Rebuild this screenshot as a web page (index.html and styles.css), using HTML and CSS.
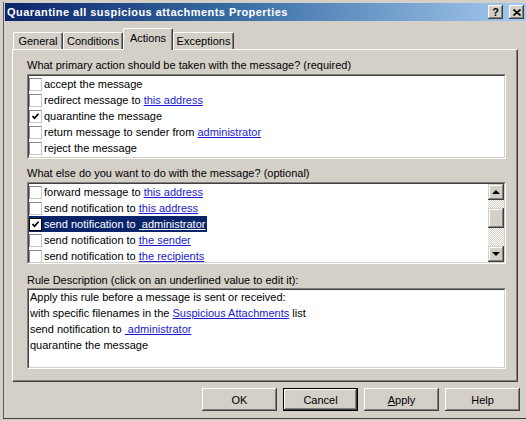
FILE: index.html
```html
<!DOCTYPE html>
<html>
<head>
<meta charset="utf-8">
<link rel="stylesheet" href="styles.css">
</head>
<body>
<div class="window">
  <div class="frame">
    <div class="titlebar">
      <span class="title">Quarantine all suspicious attachments Properties</span>
      <div class="capbtns">
        <span class="capbtn help">?</span>
        <span class="capbtn close">
          <svg width="8" height="7" viewBox="0 0 8 7"><path d="M0.5 0.5 L7.5 6.5 M7.5 0.5 L0.5 6.5" stroke="#000" stroke-width="1.6" fill="none"/></svg>
        </span>
      </div>
    </div>

    <div class="tabs">
      <div class="tab t-general">General</div>
      <div class="tab t-conditions">Conditions</div>
      <div class="tab t-actions active">Actions</div>
      <div class="tab t-exceptions">Exceptions</div>
    </div>

    <div class="panel">
      <div class="label">What primary action should be taken with the message? (required)</div>
      <div class="sunken box1">
        <div class="sunken-in list">
          <div class="row"><span class="cb"></span><span class="txt">accept the message</span></div>
          <div class="row"><span class="cb"></span><span class="txt">redirect message to <a class="lnk">this address</a></span></div>
          <div class="row"><span class="cb checked"><svg width="9" height="9" viewBox="0 0 9 9"><path d="M1.5 4 L3.5 6.3 L7.5 1.8" stroke="#000" stroke-width="1.7" fill="none"/></svg></span><span class="txt">quarantine the message</span></div>
          <div class="row"><span class="cb"></span><span class="txt">return message to sender from <a class="lnk">administrator</a></span></div>
          <div class="row"><span class="cb"></span><span class="txt">reject the message</span></div>
        </div>
      </div>

      <div class="label label2">What else do you want to do with the message? (optional)</div>
      <div class="sunken box2">
        <div class="sunken-in list2">
          <div class="items">
            <div class="row"><span class="cb"></span><span class="txt">forward message to <a class="lnk">this address</a></span></div>
            <div class="row"><span class="cb"></span><span class="txt">send notification to <a class="lnk">this address</a></span></div>
            <div class="row selected"><span class="cb checked focus"><svg width="9" height="9" viewBox="0 0 9 9"><path d="M1.5 4 L3.5 6.3 L7.5 1.8" stroke="#000" stroke-width="1.7" fill="none"/></svg></span><span class="txt">send notification to <a class="lnk">&nbsp;administrator</a></span></div>
            <div class="row"><span class="cb"></span><span class="txt">send notification to <a class="lnk">the sender</a></span></div>
            <div class="row"><span class="cb"></span><span class="txt">send notification to <a class="lnk">the recipients</a></span></div>
          </div>
          <div class="scrollbar">
            <div class="sbtn"><span class="arrow up"></span></div>
            <div class="track"><div class="thumb"></div></div>
            <div class="sbtn"><span class="arrow down"></span></div>
          </div>
        </div>
      </div>

      <div class="label label3">Rule Description (click on an underlined value to edit it):</div>
      <div class="sunken box3">
        <div class="sunken-in desc">
          <div class="line">Apply this rule before a message is sent or received:</div>
          <div class="line">with specific filenames in the <a class="lnk">Suspicious Attachments</a> list</div>
          <div class="line">send notification to <a class="lnk">&nbsp;administrator</a></div>
          <div class="line">quarantine the message</div>
        </div>
      </div>
    </div>

    <div class="buttons">
      <div class="btn">OK</div>
      <div class="btn default"><div class="btn-in">Cancel</div></div>
      <div class="btn"><span><u>A</u>pply</span></div>
      <div class="btn">Help</div>
    </div>
  </div>
</div>
</body>
</html>
```

FILE: styles.css
```css
html, body {
  margin: 0;
  padding: 0;
  background: #d4d0c8;
}
body {
  font-family: "Liberation Sans", Arial, sans-serif;
  font-size: 11px;
  color: #000;
}
.window {
  width: 526px;
  height: 421px;
  box-sizing: border-box;
  padding: 2px 0 2px 3px;
  background: #d4d0c8;
  overflow: hidden;
}
.frame {
  height: 100%;
  box-sizing: border-box;
  border-left: 1px solid #5a5a5a;
  border-bottom: 1px solid #404040;
  display: flex;
  flex-direction: column;
}
.titlebar {
  margin: 1px 0 0 1px;
  height: 18px;
  flex: none;
  background: linear-gradient(to right, #0a246a 0%, #3a6ea5 45%, #a6caf0 100%);
  display: flex;
  align-items: center;
  justify-content: space-between;
  padding-left: 2px;
}
.title {
  color: #fff;
  font-weight: bold;
  font-size: 11px;
  letter-spacing: 0.45px;
}
.capbtns {
  display: flex;
  gap: 6px;
  margin-right: 2px;
}
.capbtn {
  width: 15px;
  height: 14px;
  box-sizing: border-box;
  background: #d4d0c8;
  box-shadow: inset -1px -1px #404040, inset 1px 1px #fff, inset -2px -2px #808080;
  display: flex;
  align-items: center;
  justify-content: center;
  font-weight: bold;
  font-size: 11px;
  line-height: 14px;
}
.tabs {
  flex: none;
  display: flex;
  align-items: flex-end;
  height: 22px;
  margin: 6px 0 0 9px;
  position: relative;
  z-index: 2;
}
.tab {
  height: 17px;
  box-sizing: border-box;
  border-top: 1px solid #fff;
  border-left: 1px solid #fff;
  border-right: 1px solid #404040;
  border-radius: 2px 2px 0 0;
  box-shadow: inset -1px 0 #808080;
  text-align: center;
  line-height: 16px;
  margin-bottom: 0;
}
.t-general { width: 50px; }
.t-conditions { width: 60px; }
.t-actions { width: 50px; }
.t-exceptions { width: 61px; }
.tab.active {
  height: 22px;
  margin-bottom: -1px;
  background: #d4d0c8;
  line-height: 18px;
}
.panel {
  flex: none;
  margin: 0 8px 0 8px;
  height: 333px;
  box-sizing: border-box;
  border-top: 1px solid #fff;
  border-left: 1px solid #fff;
  border-right: 1px solid #404040;
  border-bottom: 1px solid #404040;
  box-shadow: inset -1px -1px #808080;
  padding: 8px 0 0 14px;
  position: relative;
  z-index: 1;
}
.label {
  height: 14px;
  line-height: 14px;
  margin-bottom: 2px;
  white-space: nowrap;
}
.label2 { margin-top: 7px; }
.label3 { margin-top: 9px; margin-bottom: 1px; }
.sunken {
  width: 479px;
  box-sizing: border-box;
  border-top: 1px solid #808080;
  border-left: 1px solid #808080;
  border-right: 1px solid #fff;
  border-bottom: 1px solid #fff;
}
.sunken-in {
  height: 100%;
  box-sizing: border-box;
  border-top: 1px solid #404040;
  border-left: 1px solid #404040;
  border-right: 1px solid #d4d0c8;
  border-bottom: 1px solid #d4d0c8;
  background: #fff;
}
.box1 { height: 85px; }
.box2 { height: 82px; }
.box3 { height: 81px; }
.list2 {
  display: flex;
}
.items {
  flex: 1;
}
.row {
  height: 16px;
  display: flex;
  align-items: center;
  white-space: nowrap;
}
.row .txt {
  margin-left: 1px;
  padding: 0 1px;
  line-height: 14px;
}
.row.selected {
  background: #0a246a;
  color: #fff;
  width: max-content;
  padding-right: 1px;
}
.row.selected .lnk { color: #fff; }
.cb {
  width: 13px;
  height: 13px;
  box-sizing: border-box;
  border-top: 1px solid #8a8a8a;
  border-left: 1px solid #8a8a8a;
  border-right: 1px solid #c8c8c8;
  border-bottom: 1px solid #c8c8c8;
  background: #fff;
  flex: none;
  display: flex;
  align-items: center;
  justify-content: center;
}
.cb.focus {
  border: 1px solid #000;
}
.lnk {
  color: #1a1ad0;
  text-decoration: underline;
}
.scrollbar {
  width: 16px;
  flex: none;
  display: flex;
  flex-direction: column;
}
.sbtn {
  height: 16px;
  flex: none;
  box-sizing: border-box;
  background: #d4d0c8;
  box-shadow: inset -1px -1px #404040, inset 1px 1px #d4d0c8, inset -2px -2px #808080, inset 2px 2px #fff;
  display: flex;
  align-items: center;
  justify-content: center;
}
.arrow {
  width: 0;
  height: 0;
  border-left: 4px solid transparent;
  border-right: 4px solid transparent;
}
.arrow.up { border-bottom: 4px solid #000; margin-top: -1px; }
.arrow.down { border-top: 4px solid #000; }
.track {
  flex: 1;
  padding-top: 8px;
  background: repeating-conic-gradient(#d4d0c8 0 25%, #fff 0 50%) 0 0 / 2px 2px;
}
.thumb {
  height: 20px;
  background: #d4d0c8;
  box-shadow: inset -1px -1px #404040, inset 1px 1px #d4d0c8, inset -2px -2px #808080, inset 2px 2px #fff;
}
.desc {
  padding-left: 1px;
}
.line {
  height: 16px;
  line-height: 14px;
  white-space: nowrap;
}
.buttons {
  flex: none;
  display: flex;
  justify-content: flex-end;
  gap: 6px;
  margin-top: 6px;
  padding-right: 6px;
}
.btn {
  width: 75px;
  height: 23px;
  box-sizing: border-box;
  background: #d4d0c8;
  box-shadow: inset -1px -1px #404040, inset 1px 1px #fff, inset -2px -2px #808080;
  display: flex;
  align-items: center;
  justify-content: center;
}
.btn.default {
  border: 1px solid #000;
  box-shadow: none;
}
.btn-in {
  width: 100%;
  height: 100%;
  box-sizing: border-box;
  box-shadow: inset -1px -1px #404040, inset 1px 1px #fff, inset -2px -2px #808080;
  display: flex;
  align-items: center;
  justify-content: center;
}
```
